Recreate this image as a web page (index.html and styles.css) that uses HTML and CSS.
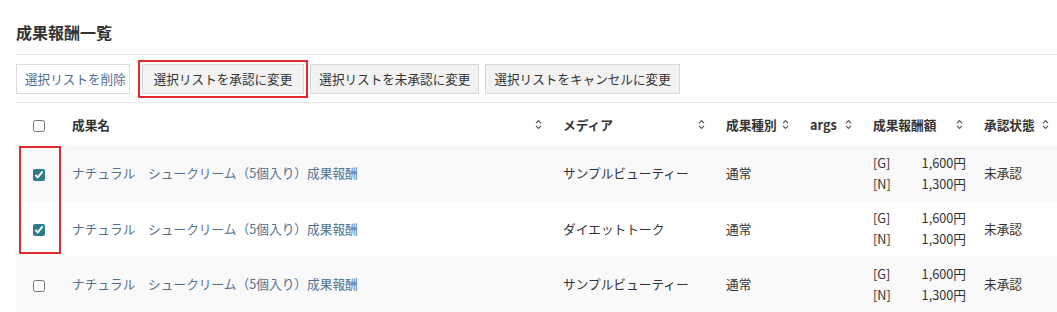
FILE: index.html
```html
<!DOCTYPE html>
<html lang="ja">
<head>
<meta charset="utf-8">
<title>成果報酬一覧</title>
<link rel="stylesheet" href="styles.css">
</head>
<body>
<div class="page">
  <h1 class="title">成果報酬一覧</h1>
  <div class="toolbar">
    <button class="btn btn-link">選択リストを削除</button>
    <button class="btn btn-gray btn-focus">選択リストを承認に変更</button>
    <button class="btn btn-gray">選択リストを未承認に変更</button>
    <button class="btn btn-gray">選択リストをキャンセルに変更</button>
  </div>
  <div class="table-wrap">
    <table class="grid">
      <colgroup>
        <col class="c-check"><col class="c-name"><col class="c-media"><col class="c-type"><col class="c-args"><col class="c-amount"><col class="c-status">
      </colgroup>
      <thead>
        <tr>
          <th class="check"><input type="checkbox"></th>
          <th><div class="th-in"><span>成果名</span><svg class="sort" viewBox="0 0 7 11"><path d="M1 4.2 L3.5 1.7 L6 4.2 M1 6.8 L3.5 9.3 L6 6.8"/></svg></div></th>
          <th><div class="th-in"><span>メディア</span><svg class="sort" viewBox="0 0 7 11"><path d="M1 4.2 L3.5 1.7 L6 4.2 M1 6.8 L3.5 9.3 L6 6.8"/></svg></div></th>
          <th><div class="th-in"><span>成果種別</span><svg class="sort" viewBox="0 0 7 11"><path d="M1 4.2 L3.5 1.7 L6 4.2 M1 6.8 L3.5 9.3 L6 6.8"/></svg></div></th>
          <th><div class="th-in"><span>args</span><svg class="sort" viewBox="0 0 7 11"><path d="M1 4.2 L3.5 1.7 L6 4.2 M1 6.8 L3.5 9.3 L6 6.8"/></svg></div></th>
          <th><div class="th-in"><span>成果報酬額</span><svg class="sort" viewBox="0 0 7 11"><path d="M1 4.2 L3.5 1.7 L6 4.2 M1 6.8 L3.5 9.3 L6 6.8"/></svg></div></th>
          <th><div class="th-in"><span>承認状態</span><svg class="sort" viewBox="0 0 7 11"><path d="M1 4.2 L3.5 1.7 L6 4.2 M1 6.8 L3.5 9.3 L6 6.8"/></svg></div></th>
        </tr>
      </thead>
      <tbody>
        <tr class="odd">
          <td class="check"><input type="checkbox" checked></td>
          <td><a class="link" href="#">ナチュラル　シュークリーム（5個入り）成果報酬</a></td>
          <td>サンプルビューティー</td>
          <td>通常</td>
          <td></td>
          <td><div class="amount"><span>[G]</span><span class="val">1,600円</span><span>[N]</span><span class="val">1,300円</span></div></td>
          <td>未承認</td>
        </tr>
        <tr>
          <td class="check"><input type="checkbox" checked></td>
          <td><a class="link" href="#">ナチュラル　シュークリーム（5個入り）成果報酬</a></td>
          <td>ダイエットトーク</td>
          <td>通常</td>
          <td></td>
          <td><div class="amount"><span>[G]</span><span class="val">1,600円</span><span>[N]</span><span class="val">1,300円</span></div></td>
          <td>未承認</td>
        </tr>
        <tr class="odd">
          <td class="check"><input type="checkbox"></td>
          <td><a class="link" href="#">ナチュラル　シュークリーム（5個入り）成果報酬</a></td>
          <td>サンプルビューティー</td>
          <td>通常</td>
          <td></td>
          <td><div class="amount"><span>[G]</span><span class="val">1,600円</span><span>[N]</span><span class="val">1,300円</span></div></td>
          <td>未承認</td>
        </tr>
      </tbody>
    </table>
    <div class="mark"></div>
  </div>
</div>
</body>
</html>
```

FILE: styles.css
```css
html, body {
  margin: 0;
  padding: 0;
  overflow: hidden;
  background: #fff;
}
body {
  font-family: "Noto Sans CJK JP", "Noto Sans", sans-serif;
  color: #333;
  width: 1057px;
  height: 312px;
}
.page {
  padding-left: 16px;
}
.title {
  margin: 0;
  padding: 20px 0 10px;
  font-size: 16px;
  line-height: 24px;
  font-weight: 700;
  color: #333;
  border-bottom: 1px solid #e6e6e6;
}
.toolbar {
  display: flex;
  gap: 6px;
  padding: 9px 0 8px;
  border-bottom: 1px solid #e6e6e6;
}
.btn {
  height: 30px;
  padding: 0 8px;
  font-family: inherit;
  font-size: 12.6px;
  line-height: 28px;
  border-radius: 0;
  cursor: pointer;
}
.btn-link {
  background: #fff;
  border: 1px solid #dcdcdc;
  color: #4f6f8f;
  padding: 0 3px 0 8px;
}
.btn-gray {
  background: #f2f2f2;
  border: 1px solid #d8d8d8;
  color: #333;
}
.btn-focus {
  margin-left: 6px;
  padding: 0 11px;
  outline: 2px solid #e5282b;
  outline-offset: 2px;
}
.table-wrap {
  position: relative;
}
.grid {
  border-collapse: collapse;
  table-layout: fixed;
  width: 1042px;
  font-size: 12.7px;
}
.c-check { width: 44px; }
.c-name { width: 491px; }
.c-media { width: 163px; }
.c-type { width: 84px; }
.c-args { width: 63px; }
.c-amount { width: 111px; }
.c-status { width: 86px; }
.grid th {
  height: 42px;
  padding: 0 9px 0 12px;
  text-align: left;
  font-weight: 700;
  color: #333;
  vertical-align: middle;
}
.th-in {
  display: flex;
  align-items: center;
  justify-content: space-between;
  gap: 4px;
}
.sort {
  width: 7px;
  height: 11px;
  flex: none;
}
.sort path {
  fill: none;
  stroke: #555;
  stroke-width: 1.2;
}
.grid td {
  height: 55.5px;
  padding: 0 12px;
  vertical-align: middle;
  color: #333;
}
.grid th.check, .grid td.check {
  padding: 0 0 0 1px;
  text-align: center;
}
.check input {
  margin: 0;
  width: 12px;
  height: 12px;
  vertical-align: middle;
  accent-color: #2e7b8c;
}
.odd td {
  background: #f9f9f9;
}
.link {
  color: #52708e;
  text-decoration: none;
}
.amount {
  display: grid;
  grid-template-columns: auto 1fr;
  width: 93px;
  line-height: 21px;
}
.amount .val {
  text-align: right;
}
.mark {
  position: absolute;
  left: 3px;
  top: 43px;
  width: 38px;
  height: 104px;
  border: 2px solid #e5282b;
}
```
